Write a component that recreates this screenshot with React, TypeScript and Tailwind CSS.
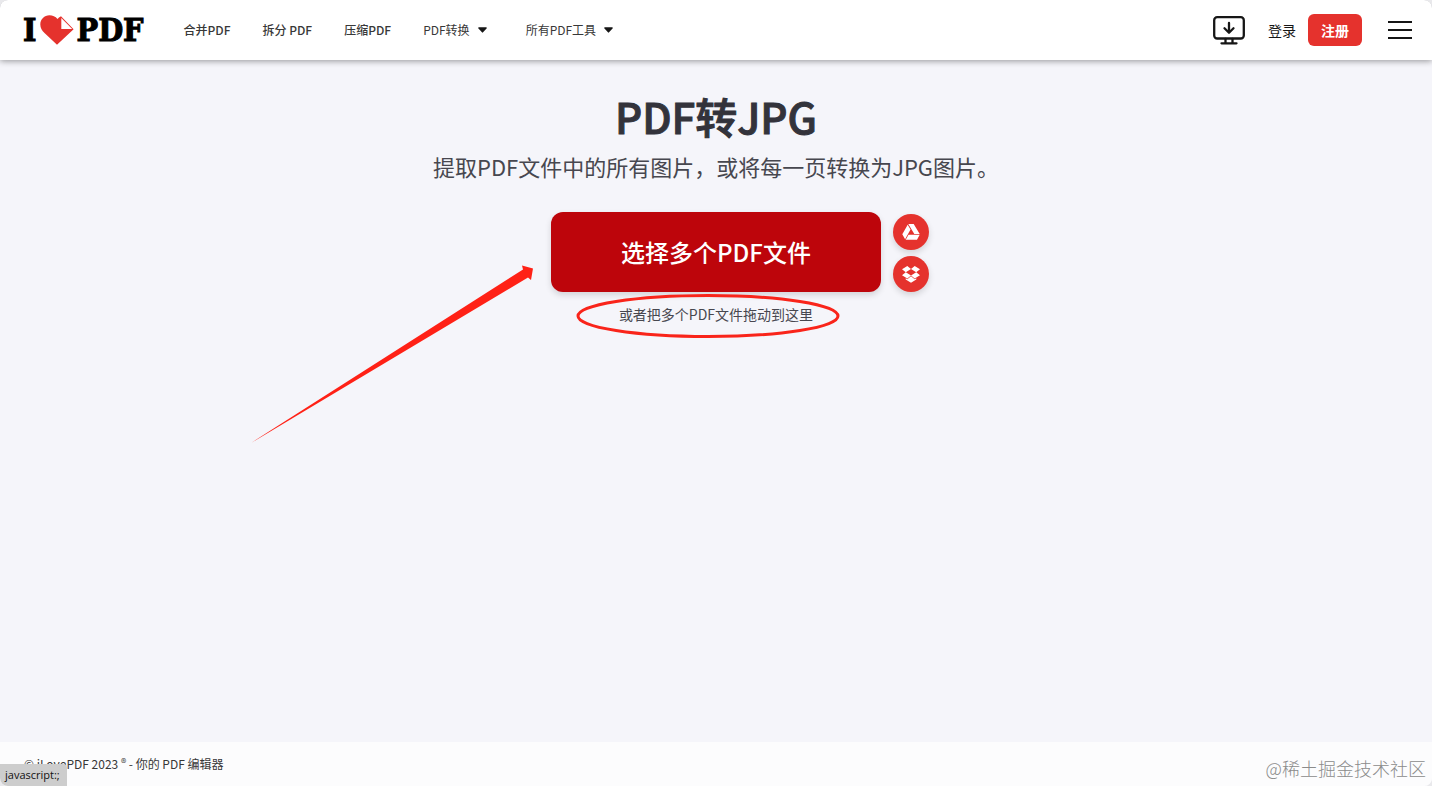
interface NavItem {
  label: string;
  dropdown?: boolean;
}

const NAV_ITEMS: NavItem[] = [
  { label: "合并PDF" },
  { label: "拆分 PDF" },
  { label: "压缩PDF" },
  { label: "PDF转换", dropdown: true },
  { label: "所有PDF工具", dropdown: true },
];

function Logo() {
  return (
    <a
      href="#"
      aria-label="I love PDF"
      className="flex shrink-0 items-center text-[32px] leading-none font-bold text-black [-webkit-text-stroke:1px_#000] font-['DejaVu_Serif_Condensed','DejaVu_Serif',serif]"
    >
      <span>I</span>
      <svg viewBox="0 0 34 31" className="mr-[2px] ml-1 h-[31px] w-[34px]" aria-hidden="true">
        <path
          d="M17.5 4C15.500 1.500 12.600.3 9.400.3 4.400.3.3 4.300.3 9.400c0 3.600 1.800 6 4.200 8.600L17 29.800l16.600-15.600L21 1.200c-1.500.7-2.700 1.600-3.500 2.800z"
          fill="#e5322d"
        />
        <path d="M21.300 3v11h10.900z" fill="#fff" />
      </svg>
      <span>PDF</span>
    </a>
  );
}

function Caret() {
  return (
    <svg viewBox="0 0 10 6" className="h-[6px] w-[9px]" aria-hidden="true">
      <path d="M1 0h8c.8 0 1.1.8.5 1.3L5.6 5.6a.8.8 0 0 1-1.2 0L.5 1.3C-.1.8.2 0 1 0z" fill="#161616" />
    </svg>
  );
}

function DesktopIcon() {
  return (
    <svg
      viewBox="0 0 32 29"
      className="h-[29px] w-8"
      fill="none"
      stroke="#161616"
      strokeWidth="2.300"
      strokeLinecap="round"
      strokeLinejoin="round"
      aria-hidden="true"
    >
      <rect x="1.200" y="1.200" width="29.600" height="21.300" rx="3" />
      <path d="M16 7v9.500M11.500 12.300l4.500 4.400 4.500-4.400M12.500 23v4M19.500 23v4M8.500 27.300h15" />
    </svg>
  );
}

function Header() {
  return (
    <header className="relative z-10 flex h-[60px] items-center rounded-t-lg bg-white pr-5 pl-[23px] shadow-[0_1px_6px_rgba(0,0,0,0.4)]">
      <Logo />
      <nav className="ml-10 flex items-center gap-8 text-xs font-medium whitespace-nowrap text-[#383838]">
        {NAV_ITEMS.map((item) =>
          item.dropdown ? (
            <button key={item.label} type="button" className="mr-[7px] flex items-center gap-2 font-normal">
              {item.label}
              <Caret />
            </button>
          ) : (
            <a key={item.label} href="#">
              {item.label}
            </a>
          )
        )}
      </nav>
      <div className="ml-auto flex shrink-0 items-center text-sm whitespace-nowrap text-[#161616]">
        <a href="#" aria-label="桌面版" className="mr-[23px]">
          <DesktopIcon />
        </a>
        <a href="#" className="mr-3">
          登录
        </a>
        <a
          href="#"
          className="mr-[26px] flex h-8 w-[54px] items-center justify-center rounded-md bg-[#e5322d] font-bold text-white"
        >
          注册
        </a>
        <button type="button" aria-label="菜单" className="flex w-6 flex-col gap-[6px]">
          <span className="h-[2px] w-full bg-[#161616]" />
          <span className="h-[2px] w-full bg-[#161616]" />
          <span className="h-[2px] w-full bg-[#161616]" />
        </button>
      </div>
    </header>
  );
}

function DriveIcon() {
  return (
    <svg viewBox="0 0 18 16" className="h-4 w-[18px]" fill="#fff" aria-hidden="true">
      <path d="M6.300 0h5.400l6 10h-5.400zM5.700.7l2.800 4.800L3.100 15.200.3 10.200zM6.500 10.800h11.200l-2.700 5H3.700z" />
    </svg>
  );
}

function DropboxIcon() {
  return (
    <svg viewBox="0 0 18 17" className="h-[17px] w-[18px]" fill="#fff" aria-hidden="true">
      <path d="M5.300 0 9 3 3.800 6.300 0 3.300zM12.700 0 18 3.300l-3.800 3L9 3zM0 9.300l3.800-3L9 9.500l-3.700 3zM14.200 6.300l3.800 3-5.300 3.200L9 9.500zM9 10.300l3.700 3 1.600-1v1.300L9 16.800l-5.300-3.200v-1.300l1.600 1z" />
    </svg>
  );
}

function ArrowMark() {
  return (
    <svg
      viewBox="0 0 284 180"
      className="pointer-events-none absolute top-[52px] right-full mr-[17px] h-[180px] w-[284px] max-w-none"
      aria-hidden="true"
    >
      <path d="M1 179 273 5.500 272 1.500l11 3L281 16l-3-2.500z" fill="#ff2116" />
    </svg>
  );
}

function EllipseMark() {
  return (
    <svg
      viewBox="0 0 264 44"
      className="pointer-events-none absolute -top-[10px] -left-[43px] h-11 w-[264px] max-w-none"
      aria-hidden="true"
    >
      <ellipse cx="132" cy="22" rx="130" ry="20.500" fill="none" stroke="#f9241a" strokeWidth="3" />
    </svg>
  );
}

function Uploader() {
  return (
    <div className="mt-[30px] grid w-full grid-cols-[1fr_auto_1fr] gap-x-3 gap-y-3">
      <div className="relative col-start-2">
        <button
          type="button"
          className="h-20 w-[330px] rounded-xl bg-[#bd050b] text-2xl font-medium text-white shadow-[0_3px_6px_rgba(0,0,0,0.14)]"
        >
          选择多个PDF文件
        </button>
        <ArrowMark />
      </div>
      <div className="flex flex-col justify-end gap-[6px]">
        <button
          type="button"
          aria-label="Google Drive"
          className="flex size-9 items-center justify-center rounded-full bg-[#e5322d] shadow-[0_3px_6px_rgba(0,0,0,0.14)]"
        >
          <DriveIcon />
        </button>
        <button
          type="button"
          aria-label="Dropbox"
          className="flex size-9 items-center justify-center rounded-full bg-[#e5322d] shadow-[0_3px_6px_rgba(0,0,0,0.14)]"
        >
          <DropboxIcon />
        </button>
      </div>
      <p className="relative col-start-2 justify-self-center text-sm whitespace-nowrap text-[#47474f]">
        或者把多个PDF文件拖动到这里
        <EllipseMark />
      </p>
    </div>
  );
}

export default function App() {
  return (
    <div className="bg-[#e9e9ec] font-['Noto_Sans_CJK_SC',sans-serif]">
      <div className="relative flex min-h-screen flex-col overflow-hidden rounded-lg bg-[#f5f5fa]">
        <Header />
        <main className="flex flex-1 flex-col items-center px-4 pt-[30px]">
          <h1 className="text-[42px] leading-[52px] font-medium text-[#33333b] [-webkit-text-stroke:1px_#33333b]">
            PDF转JPG
          </h1>
          <p className="mt-2 text-center text-[22px] leading-8 text-[#47474f]">
            提取PDF文件中的所有图片，或将每一页转换为JPG图片。
          </p>
          <Uploader />
        </main>
        <footer className="flex h-11 items-center justify-between bg-[#fcfcfd] pr-[6px] pl-6 text-xs text-[#383838]">
          <p>
            © iLovePDF 2023 <span className="align-top text-[11px] leading-3">®</span> - 你的 PDF 编辑器
          </p>
          <p className="mt-2 text-lg leading-6 font-light text-[#8b8b8b]">@稀土掘金技术社区</p>
        </footer>
        <div className="absolute bottom-0 left-0 z-10 flex h-[22px] items-center rounded-tr-sm bg-[#cdcdcd] pr-[7px] pl-[5px] text-[11px] text-[#111] font-['Open_Sans','Noto_Sans',sans-serif]">
          javascript:;
        </div>
      </div>
    </div>
  );
}
